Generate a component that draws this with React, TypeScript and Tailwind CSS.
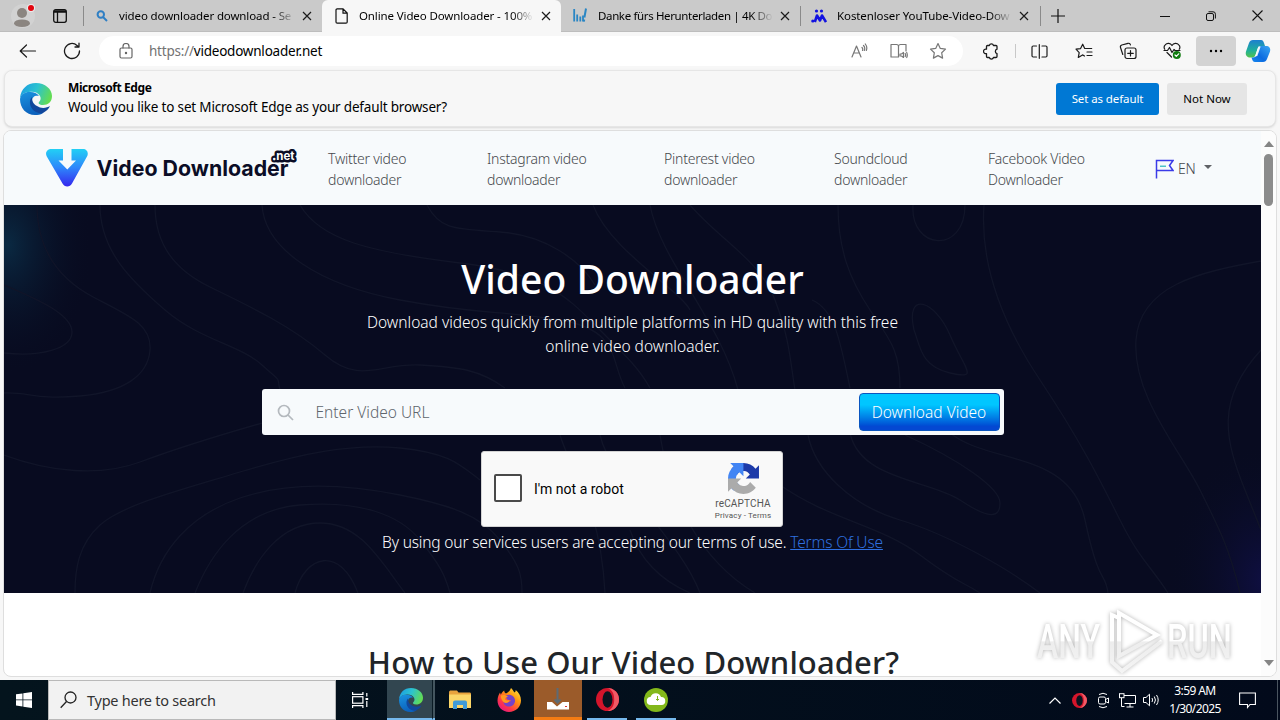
import { ReactNode } from 'react';

const Close = ({ className = '' }: { className?: string }) => (
    <svg width="10" height="10" viewBox="0 0 10 10" className={className} fill="none" stroke="#1b1b1b" strokeWidth="1.2">
        <path d="M1 1l8 8M9 1l-8 8" />
    </svg>
);

const EdgeLogo = ({ size, id }: { size: number; id: string }) => (
    <svg width={size} height={size} viewBox="0 0 32 32">
        <defs>
            <linearGradient id={id + 'a'} x1="0" y1="0.2" x2="1" y2="0.5">
                <stop offset="0" stopColor="#1b9de2" />
                <stop offset="0.5" stopColor="#2cc3cf" />
                <stop offset="1" stopColor="#63dc52" />
            </linearGradient>
            <linearGradient id={id + 'b'} x1="0" y1="0" x2="0.3" y2="1">
                <stop offset="0" stopColor="#1a94e0" />
                <stop offset="1" stopColor="#0c62bd" />
            </linearGradient>
        </defs>
        <path d="M0 15C1 6 7 0 16 0c9 0 16 6 16 13 0 6-4 9-9 9-4 0-5-2-4-3 2-2 2-4 1-6-2-4-7-5-11-4-4 0-7 2-9 6z" fill={`url(#${id}a)`} />
        <path d="M0 16c1-5 5-7 9-7 4-.5 8 1 10 4-4-1-7 1-7 5 0 6 6 10 11 12-3 2-5 2-8 2C6 32 0 25 0 16z" fill={`url(#${id}b)`} />
        <path d="M12 14c-4 4-2 12 4 15 3 1 5 2 7 1 3-2 6-4 7-7-3 2-9 3-13 0-4-2-5-5-5-9z" fill="#11479c" />
    </svg>
);

const Opera = ({ size }: { size: number }) => (
    <svg width={size} height={size} viewBox="0 0 24 24">
        <circle cx="12" cy="12" r="12" fill="#d4152b" />
        <path d="M12 0a12 12 0 0 1 0 24c5-2 7-6 7-12S17 2 12 0z" fill="#f05a66" />
        <ellipse cx="12" cy="12" rx="5.2" ry="8.6" fill="#0a1420" />
    </svg>
);

type TabProps = { icon: ReactNode; title: string; active?: boolean; divider?: boolean; text: string };

const Tab = ({ icon, title, active, divider, text }: TabProps) => (
    <div className={`relative flex h-8 w-[239px] shrink-0 items-center ${active ? 'rounded-t-md bg-[#f7f7f7]' : ''}`}>
        {divider && <div className="absolute left-0 top-[6px] h-5 w-px bg-[#8a8a8a]" />}
        <div className="ml-[11px] flex w-4 justify-center">{icon}</div>
        <div className={`ml-[9px] w-[176px] overflow-hidden whitespace-nowrap text-[11.5px] text-black [mask-image:linear-gradient(to_right,black_154px,transparent_176px)] ${text}`}>{title}</div>
        <Close className="ml-[7px]" />
    </div>
);

const TabBar = () => (
    <div className="flex h-8 shrink-0 items-center border-b border-[#bdbdbd] bg-[#cacaca]">
        <div className="relative ml-[11px] flex h-6 w-6 items-center justify-center">
            <svg width="24" height="24" viewBox="0 0 24 24">
                <circle cx="12" cy="12" r="12" fill="#d2d2d2" />
                <circle cx="11" cy="9" r="5" fill="#8b8580" />
                <ellipse cx="11" cy="19.2" rx="8" ry="3.8" fill="#8b8580" />
                <circle cx="20" cy="4" r="4" fill="#ececec" />
                <circle cx="20" cy="4" r="3" fill="#e2060f" />
            </svg>
        </div>
        <svg className="ml-[18px] mr-[16px]" width="14" height="14" viewBox="0 0 14 14" fill="none" stroke="#111" strokeWidth="1.3">
            <rect x=".7" y=".7" width="12.6" height="12.6" rx="2" />
            <path d="M.7 3h12.6M1 2h12M4.5 3v10" />
        </svg>
        <Tab
            divider
            text="tracking-[-0.12px]"
            title="video downloader download - Se"
            icon={
                <svg width="12" height="12" viewBox="0 0 12 12" fill="none" stroke="#2f7fc4" strokeWidth="2">
                    <circle cx="4.8" cy="4.5" r="3.2" />
                    <path d="M7 7l4 4" />
                </svg>
            }
        />
        <Tab
            active
            text="tracking-[-0.12px] pl-px"
            title="Online Video Downloader - 100%"
            icon={
                <svg width="13" height="16" viewBox="0 0 13 16" fill="none" stroke="#111" strokeWidth="1.2">
                    <path d="M1 2a1.2 1.2 0 0 1 1.2-1.2H8l4.2 4.3V14a1.2 1.2 0 0 1-1.2 1.2H2.200A1.200 1.200 0 0 1 1 14zM8 1v4.200h4.200" />
                </svg>
            }
        />
        <Tab
            text="tracking-[-0.36px] pl-px"
            title="Danke fürs Herunterladen | 4K Do"
            icon={
                <svg width="14" height="15" viewBox="0 0 14 15" stroke="#2a86c4" strokeWidth="1.8" fill="none">
                    <path d="M1.200 1v12.500M4.200 6.500v7M7.300 8.500v5M10 7.500v6" />
                    <path d="M13 .5l-1.600 9M11.200 11.500l-.3 2" strokeWidth="2" />
                </svg>
            }
        />
        <Tab
            divider
            text="tracking-[-0.1px] pl-px"
            title="Kostenloser YouTube-Video-Dow"
            icon={
                <svg width="16" height="14" viewBox="0 0 16 14" fill="#1212e0">
                    <circle cx="5.500" cy="2" r="1.600" />
                    <circle cx="10.500" cy="2" r="1.600" />
                    <circle cx="1.800" cy="12" r="1.600" />
                    <path d="M3.800 13L6 6.500l3 5 2-5L15 13" stroke="#1212e0" strokeWidth="2.600" fill="none" strokeLinejoin="round" />
                </svg>
            }
        />
        <div className="ml-px h-5 w-px bg-[#8a8a8a]" />
        <svg className="ml-[10px]" width="14" height="14" viewBox="0 0 14 14" stroke="#111" strokeWidth="1.200">
            <path d="M7 0v14M0 7h14" />
        </svg>
        <div className="ml-auto flex items-center pr-[17px]">
            <svg width="10" height="10" viewBox="0 0 10 10" stroke="#111"><path d="M0 5.500h10" /></svg>
            <svg className="ml-9" width="10" height="10" viewBox="0 0 10 10" fill="none" stroke="#111">
                <rect x=".5" y="2.500" width="7" height="7" rx="1.500" />
                <path d="M2.500.8h4.500a2.300 2.300 0 0 1 2.400 2.400v4.300" />
            </svg>
            <svg className="ml-9" width="11" height="11" viewBox="0 0 11 11" stroke="#111" strokeWidth="1.100"><path d="M.5.5l10 10M10.500.5l-10 10" /></svg>
        </div>
    </div>
);

const Slot = ({ children, className = 'w-11' }: { children: ReactNode; className?: string }) => (
    <div className={`flex h-[30px] shrink-0 items-center justify-center ${className}`}>{children}</div>
);

const line = { fill: 'none', stroke: '#1b1b1b', strokeWidth: 1.2, strokeLinecap: 'round', strokeLinejoin: 'round' } as const;
const starPath = 'M9 1.500l2.300 4.900 5.200.7-3.800 3.700.9 5.300L9 13.600l-4.600 2.500.9-5.300L1.500 7.100l5.200-.7z';

const Toolbar = () => (
    <div className="flex h-[38px] shrink-0 items-center pl-[6px]">
        <Slot>
            <svg width="18" height="14" viewBox="0 0 18 14" {...line}><path d="M16.500 7H1.200M7.500 1L1.200 7l6.300 6" /></svg>
        </Slot>
        <Slot>
            <svg width="18" height="18" viewBox="0 0 18 18" {...line} strokeWidth="1.300"><path d="M16.500 9A7.500 7.500 0 1 1 14 3.400l1.800 1.600M16 1.200V5h-4" /></svg>
        </Slot>
        <div className="ml-[5px] flex h-[30px] w-[864px] items-center rounded-full bg-white">
            <svg className="ml-[20px]" width="14" height="16" viewBox="0 0 14 16" {...line} stroke="#666">
                <rect x="1" y="5" width="12" height="10" rx="1.500" />
                <path d="M4 5V3.500a3 3 0 0 1 6 0V5" />
                <circle cx="7" cy="10" r=".6" fill="#666" />
            </svg>
            <div className="ml-[16px] text-[13.5px] tracking-[-0.22px] text-black"><span className="text-[#737373]">https://</span>videodownloader.net</div>
            <div className="ml-auto flex items-center pr-[6px]">
                <Slot className="w-10">
                    <svg width="17" height="16" viewBox="0 0 17 16" {...line} stroke="#777">
                        <path d="M1 14L5.500 3 10 14M2.600 10h5.800M11 4.500q1.200 1.200.5 3M12.500 2.500q2 2 .8 5M14.300 1q2.400 3 1 6.500" />
                    </svg>
                </Slot>
                <Slot className="w-10">
                    <svg width="18" height="16" viewBox="0 0 18 16" {...line} stroke="#777">
                        <path d="M8.500 14H1V1.500h5.500a2 2 0 0 1 2 2V14M8.500 3.500a2 2 0 0 1 2-2H16V8" />
                        <path d="M10 11h1.500l2-1.500v5L11.500 13H10zM15.200 10.500q.8 1.500 0 3M16.700 9.500q1.200 2.500 0 5" />
                    </svg>
                </Slot>
                <Slot className="w-[38px]">
                    <svg width="18" height="18" viewBox="0 0 18 18" {...line} stroke="#777"><path d={starPath} /></svg>
                </Slot>
            </div>
        </div>
        <Slot className="ml-[6px] w-11">
            <svg width="17" height="17" viewBox="0 0 17 17" {...line} strokeWidth="1.300">
                <path d="M4.500 2.500h1.800a2.200 2.200 0 0 1 4.200 0H13a1 1 0 0 1 1 1V6.200a2.300 2.300 0 0 0 0 4.400v2.900a1 1 0 0 1-1 1h-2.500a2.200 2.200 0 0 1-4.200 0H4.500a1 1 0 0 1-1-1v-2.900a2.300 2.300 0 1 1 0-4.400V3.500a1 1 0 0 1 1-1z" />
            </svg>
        </Slot>
        <div className="ml-[2px] h-[14px] w-px bg-[#c8c8c8]" />
        <Slot className="ml-[1px] w-11">
            <svg width="17" height="15" viewBox="0 0 17 15" {...line}><path d="M5.500 13H2.200A1.200 1.200 0 0 1 1 11.800V3.200A1.200 1.200 0 0 1 2.200 2h3.300M11 2h3.800A1.200 1.200 0 0 1 16 3.200v8.600a1.200 1.200 0 0 1-1.200 1.200H11M8.300.7v13.600" /></svg>
        </Slot>
        <Slot className="ml-px w-11">
            <svg width="18" height="17" viewBox="0 0 18 17" {...line}><path d="M9.500 13l-2-1.100-4.200 2.500.9-4.800L1 6.200l4.600-.6L7.700 1.200l2 4.300h7M12 9h5M12 12.500h5" /></svg>
        </Slot>
        <Slot>
            <svg width="18" height="18" viewBox="0 0 18 18" {...line}>
                <rect x="6" y="6" width="11" height="10.500" rx="2" />
                <path d="M11.500 8.500v5.500M8.700 11.300h5.600M3.800 12.500L1.500 5.500A2 2 0 0 1 2.800 3L9 1.300a2 2 0 0 1 2.400 1.500" />
            </svg>
        </Slot>
        <Slot>
            <svg width="19" height="18" viewBox="0 0 19 18" {...line}>
                <path d="M9 3.500C7.500 1 4 .8 2.200 2.800 1 4 1 6 1.800 7.300M9 3.500C10.500 1 14 .8 15.800 2.800 17 4 17 6 16.200 7.300M4 10.500l4.500 4.500M1 8.500h3.500l2-3 2.500 5 2-3 1 1H17" />
                <circle cx="13.800" cy="13" r="4" fill="#107c10" stroke="none" />
                <path d="M12 13l1.300 1.300 2.400-2.500" stroke="#fff" />
            </svg>
        </Slot>
        <Slot className="ml-[2px] w-10 rounded bg-[#d3d3d3]">
            <svg width="14" height="4" viewBox="0 0 14 4"><circle cx="2" cy="2" r="1.200" /><circle cx="7" cy="2" r="1.200" /><circle cx="12" cy="2" r="1.200" /></svg>
        </Slot>
        <Slot className="w-11">
            <svg width="26" height="24" viewBox="0 0 26 24">
                <defs>
                    <linearGradient id="cpa" x1="0" y1="0" x2="0" y2="1"><stop offset="0" stopColor="#1d7fd0" /><stop offset=".6" stopColor="#1fb09a" /><stop offset="1" stopColor="#54c34c" /></linearGradient>
                    <linearGradient id="cpb" x1="1" y1="0" x2="0" y2="1"><stop offset="0" stopColor="#3aa7f3" /><stop offset=".6" stopColor="#0c6be0" /><stop offset="1" stopColor="#1688f0" /></linearGradient>
                </defs>
                <path d="M8 1h8c2 0 2.500 1.500 3 3l1 3h-4c-2 0-3 1-3.600 3L10.500 16c-.6 1.600-1.500 2.500-3 2.500H5c-3 0-5-2.500-4-6L4 4c.7-2 2-3 4-3z" fill="url(#cpa)" />
                <path d="M18 23h-8c-2 0-2.500-1.500-3-3l-.5-1.500h1.500c2 0 3-1 3.600-3L13.500 9.500C14.100 7.900 15 7 16.500 7H21c3 0 5 2 4 5.500L22 20c-.7 2-2 3-4 3z" fill="url(#cpb)" />
                <path d="M13.500 7.500L10 17.500l2.300-.5L15.500 8z" fill="#fff" opacity=".9" />
            </svg>
        </Slot>
    </div>
);

const DefaultBrowserBar = () => (
    <div className="mx-1 flex h-[57px] shrink-0 items-center rounded-lg border border-[#e6e6e6] bg-[#f7f7f7] pl-[15px] pr-7 shadow-sm">
        <EdgeLogo size={32} id="bar" />
        <div className="ml-4 pb-px text-black">
            <div className="text-[12px] font-bold leading-[18px] tracking-[-0.42px]">Microsoft Edge</div>
            <div className="text-[13.5px] leading-5 tracking-[-0.18px]">Would you like to set Microsoft Edge as your default browser?</div>
        </div>
        <button className="ml-auto h-8 w-[103px] rounded-[3px] bg-[#0078d4] text-[11.5px] tracking-[-0.1px] text-white">Set as default</button>
        <button className="ml-2 h-8 w-20 rounded-[3px] bg-[#e5e5e5] text-[11.5px] text-black">Not Now</button>
    </div>
);

const navLinks = [
    { label: ['Twitter video', 'downloader'], width: 'w-[159px]' },
    { label: ['Instagram video', 'downloader'], width: 'w-[177px]' },
    { label: ['Pinterest video', 'downloader'], width: 'w-[170px]' },
    { label: ['Soundcloud', 'downloader'], width: 'w-[154px]' },
    { label: ['Facebook Video', 'Downloader'], width: 'w-[167px]' },
];

const SiteHeader = () => (
    <div className="flex h-[74px] shrink-0 items-center bg-[#f7fafc] pl-[42px]">
        <svg width="251" height="42" viewBox="0 0 251 42" className="shrink-0">
            <defs>
                <linearGradient id="vlogo" x1="0" y1="0" x2="0" y2="1">
                    <stop offset="0" stopColor="#22d0f5" />
                    <stop offset="0.5" stopColor="#2e86fb" />
                    <stop offset="1" stopColor="#3526ee" />
                </linearGradient>
            </defs>
            <path d="M5 2h32c4 0 6 4 4 7.500L26 36.500c-2 4-7.500 4-9.500 0L.8 9.500C-1.200 6 1 2 5 2z" fill="url(#vlogo)" />
            <path d="M17 0h8.500v13.500H30l-8.700 9-8.800-9H17z" fill="#f7fafc" />
            <text x="50.500" y="29" textLength="192" lengthAdjust="spacingAndGlyphs" className="fill-[#0b0d26] font-['Inter'] text-[22px] font-bold">Video Downloader</text>
            <text x="226.500" y="12.500" textLength="22" lengthAdjust="spacingAndGlyphs" className="fill-white stroke-[#0b0d26] stroke-[5px] font-['Inter'] text-[12px] font-bold [paint-order:stroke] [stroke-linejoin:round]">.net</text>
        </svg>
        <div className="ml-[31px] flex pt-px text-[14px] font-light leading-[21px] tracking-[-0.24px] text-[#45484c]">
            {navLinks.map((link) => (
                <div key={link.label[0]} className={link.width}>
                    <div>{link.label[0]}</div>
                    <div>{link.label[1]}</div>
                </div>
            ))}
        </div>
        <svg className="mt-px" width="19" height="20" viewBox="0 0 19 20" fill="none" stroke="#3b3be8" strokeWidth="1.500">
            <path d="M1.500 19.500V1.500H18l-3.500 5 3.500 5H1.500" />
            <path d="M5 7.200h6" stroke="#4cc3c9" />
        </svg>
        <div className="ml-1 text-[14px] font-light tracking-[-0.2px] text-[#45484c]">EN</div>
        <div className="mb-[2px] ml-2 border-x-4 border-t-4 border-x-transparent border-t-[#606266]" />
    </div>
);

const contours = [
    'M37 205C37 250 60 280 95 298S152 325 150 350 125 392 80 396 30 392 4 393',
    'M4 285C40 300 72 315 72 332S40 357 4 353',
    'M100 205C100 250 130 280 165 310S240 345 262 365 276 375 280 390',
    'M155 205C155 245 175 270 210 287S290 325 325 355 380 363 420 365 480 370 505 388',
    'M262 205C265 250 320 285 400 300S500 310 560 320 610 360 625 388',
    'M300 205C320 240 370 252 460 263S570 300 600 330 640 370 650 388',
    'M427 205C440 230 455 229 500 232S580 260 595 285',
    'M4 455C50 472 100 477 140 462S220 435 262 423',
    'M75 593C75 570 78 545 100 525S180 490 240 472 350 443 400 448 460 465 480 480',
    'M150 593C160 550 190 515 240 498S350 485 400 495 480 515 500 540 522 575 522 593',
    'M195 593C210 555 240 510 300 505S400 515 420 540 445 575 450 593',
    'M243 593C255 560 280 523 320 523S380 560 405 593',
    'M295 593C305 555 340 545 358 593',
    'M593 205C610 250 680 290 690 310',
    'M650 205C660 260 720 320 738 390',
    'M690 205C720 240 760 260 775 300S790 360 795 390',
    'M838 205C838 250 850 280 870 310S900 350 900 388',
    'M913 205C910 250 965 255 965 205',
    'M984 205C980 260 1000 320 1040 380S1100 480 1120 520 1150 565 1168 593',
    'M1261 261C1200 272 1140 285 1136 340S1180 450 1200 490 1230 550 1240 593',
    'M1261 350C1215 400 1225 440 1245 490L1261 530',
    'M914 330C905 290 935 300 950 335S980 380 950 373 920 345 914 330z',
    'M808 435C815 470 850 505 900 520S1010 570 1040 593',
    'M850 433C860 480 930 480 960 500S1000 518 1000 503 960 460 905 435',
    'M950 433C990 465 1070 450 1085 520S1105 570 1108 593',
    'M780 485C830 520 880 525 920 555S960 580 980 593',
    'M660 435C670 500 700 560 755 593M630 530C640 560 660 580 690 593',
    'M560 435C570 470 600 500 605 593M600 435C610 480 680 540 700 593',
    'M812 300C835 310 840 340 850 388',
];

const RecaptchaLogo = () => (
    <svg width="31" height="31" viewBox="0 0 64 64">
        <path fill="#1c3aa9" d="M64 31.955l-.033-1.370V4.687l-7.160 7.160C50.948 4.674 42.033.093 32.050.093c-10.400 0-19.622 4.960-25.458 12.640l11.736 11.860a15.550 15.550 0 0 1 4.754-5.334c2.050-1.600 4.952-2.906 8.968-2.906.485 0 .860.057 1.135.163 4.976.393 9.288 3.140 11.828 7.124l-8.307 8.307L64 31.953" />
        <path fill="#4285f4" d="M31.862.094l-1.370.033H4.594l7.160 7.160C4.580 13.147 0 22.060 0 32.046c0 10.400 4.960 19.622 12.640 25.458L24.500 45.768a15.550 15.550 0 0 1-5.334-4.754c-1.600-2.050-2.906-4.952-2.906-8.968 0-.485.057-.860.163-1.135.393-4.976 3.140-9.288 7.124-11.828l8.307 8.307L31.860.095" />
        <path fill="#ababab" d="M0 32.045l.033 1.370v25.898l7.160-7.160c5.860 7.173 14.774 11.754 24.760 11.754 10.400 0 19.622-4.960 25.458-12.640l-11.736-11.860a15.550 15.550 0 0 1-4.754 5.334c-2.050 1.600-4.952 2.906-8.968 2.906-.485 0-.860-.057-1.135-.163-4.976-.393-9.288-3.140-11.828-7.124l8.307-8.307L0 32.050" />
    </svg>
);

const Hero = () => (
    <div className="relative h-[388px] shrink-0 overflow-hidden bg-[#080b20]">
        <svg className="absolute inset-0" width="1257" height="388" viewBox="4 205 1257 388">
            <defs>
                <radialGradient id="glowLeft"><stop offset="0" stopColor="#0a2942" /><stop offset="1" stopColor="#080b20" stopOpacity="0" /></radialGradient>
                <radialGradient id="glowRight"><stop offset="0" stopColor="#0f0f42" /><stop offset="1" stopColor="#080b20" stopOpacity="0" /></radialGradient>
            </defs>
            <ellipse cx="8" cy="245" rx="85" ry="130" fill="url(#glowLeft)" />
            <ellipse cx="1265" cy="580" rx="100" ry="140" fill="url(#glowRight)" />
            <g fill="none" stroke="#111529" strokeWidth="1.300">
                {contours.map((d) => <path key={d} d={d} />)}
            </g>
        </svg>
        <div className="relative flex flex-col items-center pt-[50px] text-white">
            <h1 className="text-[39px] font-medium leading-[48px]">Video Downloader</h1>
            <p className="mt-[7px] text-center text-[15.5px] font-light leading-6">
                Download videos quickly from multiple platforms in HD quality with this free<br />online video downloader.
            </p>
            <div className="mt-[31px] flex h-[46px] w-[742px] items-center rounded-[3px] bg-[#f7fafc] pr-1">
                <svg className="ml-[15px]" width="17" height="17" viewBox="0 0 17 17" fill="none" stroke="#b4b9be" strokeWidth="1.700">
                    <circle cx="7" cy="7" r="5.500" />
                    <path d="M11 11l5 5" />
                </svg>
                <div className="ml-[22px] pt-[2px] text-[15.5px] font-light text-[#5f666d]">Enter Video URL</div>
                <button className="ml-auto h-[38px] w-[141px] rounded border border-[#0a55c0] bg-linear-to-b from-[#00c6ff] from-30% to-[#0448d2] to-90% pt-[2px] text-[15.5px] font-light text-white">Download Video</button>
            </div>
            <div className="mr-px mt-4 flex h-[76px] w-[302px] items-center rounded-[3px] border border-[#d3d3d3] bg-[#f9f9f9] pl-3">
                <div className="mb-[2px] h-7 w-7 rounded-[2px] border-2 border-[#4a4a4a] bg-white" />
                <div className="ml-3 font-['Roboto'] text-[14px] text-black">I'm not a robot</div>
                <div className="ml-auto mr-[10px] flex w-[58px] flex-col items-center pt-[6px] font-['Roboto'] text-[#555]">
                    <RecaptchaLogo />
                    <div className="mt-[3px] text-[10px] leading-[13px] tracking-[0.15px]">reCAPTCHA</div>
                    <div className="whitespace-nowrap text-[8px] leading-[12px] tracking-[0.15px]">Privacy - Terms</div>
                </div>
            </div>
            <p className="mt-[3px] text-[15.5px] font-light leading-6 tracking-[-0.17px]">
                By using our services users are accepting our terms of use. <a className="text-[#2f6fdf] underline">Terms Of Use</a>
            </p>
        </div>
    </div>
);

const Watermark = () => (
    <svg className="absolute bottom-0 left-[1028px] drop-shadow-[0_0_2px_rgba(0,0,0,0.3)]" width="210" height="68" viewBox="0 0 210 68">
        <defs>
            <linearGradient id="wm" gradientUnits="userSpaceOnUse" x1="0" y1="0" x2="0" y2="68">
                <stop offset=".48" stopColor="#fff" />
                <stop offset=".5" stopColor="#ededed" />
                <stop offset="1" stopColor="#f5f5f5" />
            </linearGradient>
        </defs>
        <g fill="url(#wm)" className="font-['Roboto'] text-[49px] font-medium">
            <text x="5" y="50" textLength="63" lengthAdjust="spacingAndGlyphs">ANY</text>
            <text x="135" y="50" textLength="65" lengthAdjust="spacingAndGlyphs">RUN</text>
        </g>
        <g fill="none" stroke="url(#wm)" strokeWidth="4">
            <path d="M87 5v43l38-21z" />
            <path d="M87 10l-7-3v47l10 9 40-30" />
        </g>
    </svg>
);

const Scrollbar = () => (
    <div className="flex w-[15px] shrink-0 flex-col items-center bg-[#fcfcfc] py-[10px]">
        <div className="border-x-[5px] border-b-[6px] border-x-transparent border-b-[#858585]" />
        <div className="mt-[7px] h-[52px] w-[9px] rounded-full bg-[#8b8b8b]" />
        <div className="mt-auto border-x-[5px] border-t-[6px] border-x-transparent border-t-[#858585]" />
    </div>
);

const WebPage = () => (
    <div className="mx-[3px] mt-[3px] flex h-[547px] shrink-0 overflow-hidden rounded-lg border border-[#dedede] bg-white">
        <div className="relative flex w-[1257px] shrink-0 flex-col overflow-hidden">
            <SiteHeader />
            <Hero />
            <h2 className="mt-[48px] pl-[2px] text-center text-[31px] font-medium leading-[42px] tracking-[0.1px] text-[#212529]">How to Use Our Video Downloader?</h2>
            <Watermark />
        </div>
        <Scrollbar />
    </div>
);

const Taskbar = () => (
    <div className="mt-auto flex h-10 shrink-0 items-center bg-linear-to-r from-[#04141d] to-[#020a1b] text-white">
        <Slot className="w-12">
            <svg width="16" height="16" viewBox="0 0 16 16" fill="#fff"><path d="M0 2.300l6.500-.9v6.100H0zM7.300 1.200L16 0v7.500H7.300zM0 8.300h6.500v6.200L0 13.600zM7.300 8.300H16V16l-8.700-1.200z" /></svg>
        </Slot>
        <div className="flex h-10 w-72 items-center border border-[#b9b9b9] bg-[#f2f2f2]">
            <svg className="ml-[11px]" width="17" height="18" viewBox="0 0 17 18" fill="none" stroke="#222" strokeWidth="1.300">
                <circle cx="10.500" cy="6.500" r="5.500" />
                <path d="M6.500 10.500L.7 16.700" />
            </svg>
            <div className="ml-[10px] pt-[2px] text-[14.500px] tracking-[-0.25px] text-[#333]">Type here to search</div>
        </div>
        <Slot className="w-12">
            <svg width="17" height="16" viewBox="0 0 17 16" fill="none" stroke="#fff" strokeWidth="1.200">
                <path d="M.6 0v2.400h10.300V0M.6 16v-2.400h10.300V16" />
                <rect x=".6" y="4.700" width="10.300" height="6.500" />
                <path d="M14.800 1v3.500M14.800 9v6" />
                <path d="M13.500 6h2.700v2h-2.700z" fill="#fff" stroke="none" />
            </svg>
        </Slot>
        <div className="ml-[3px] flex h-10 w-[45px] items-center justify-center border-b-2 border-[#76b9ed] bg-[#324650] pl-[2px] pt-[2px]"><EdgeLogo size={24} id="task" /></div>
        <div className="h-10 w-[3px] border-b-2 border-l border-b-[#76b9ed] border-l-[#0a1b24] bg-[#44565f]" />
        <Slot className="w-[49px]">
            <svg width="22" height="20" viewBox="0 0 22 20">
                <path d="M0 2.500C0 1 .8.5 2 .5h6l1.500 2H20.500c1 0 1.500.5 1.500 1.500V17H0z" fill="#e8a33d" />
                <path d="M0 4.500h22V18H0z" fill="#fbd668" />
                <path d="M4 19v-6.500a2 2 0 0 1 2-2h10a2 2 0 0 1 2 2V19h-4v-4H8v4z" fill="#3f9bd8" />
            </svg>
        </Slot>
        <Slot className="w-[50px]">
            <svg width="24" height="24" viewBox="0 0 24 24">
                <defs>
                    <linearGradient id="fox" x1="1" y1="0" x2=".2" y2="1"><stop offset="0" stopColor="#fff14d" /><stop offset=".4" stopColor="#ff980e" /><stop offset=".75" stopColor="#ff3647" /><stop offset="1" stopColor="#e31587" /></linearGradient>
                </defs>
                <path d="M14 0c1.500 1 2 3 3.500 4.500 1-.5 1.200-1.500 1.200-2.500 3 2.500 5.300 6 5.300 10.500C24 19 18.500 24 12 24S.5 19 .5 12.500C.5 9 2 6 3 4.500l.8 2.300C4.500 5 6 3 7.200 2.500 7.200 4 8 5 9 5.500c2.500-1 4-3 5-5.500z" fill="url(#fox)" />
                <path d="M7 9.500c1-2 4-3 6.500-2.500 3 .5 5 3.500 4.500 6.500s-3 5-6 5-5.500-2-5.700-5c1.500 1.500 4 1.700 5.500.5 1-.8 2-.6 2.200-1.500-1.500-.6-4 0-4.500-2.200z" fill="#7542c8" />
                <path d="M4 7.500c2-1 5-.5 7 1-1 .7-2.500 1-3 2.500 1 2 3 1.500 4.500 1.500-1 2.500-4.500 3.500-6.500 1-1.500-2-2.500-4-2-6z" fill="#ff9a1f" />
            </svg>
        </Slot>
        <div className="flex h-10 w-12 items-center justify-center border-b-[3px] border-[#f57c13] bg-[#9b5b2a]">
            <svg width="22" height="24" viewBox="0 0 22 24">
                <path d="M0 15h5l5 4.500L15.500 15H22v7.500H0z" fill="#fff" />
                <path d="M10.500 1v14M7.500 12.500l3 3 3-3" stroke="#5d6b74" strokeWidth="2" fill="none" />
                <path d="M18 19.500h2" stroke="#d33" />
            </svg>
        </div>
        <div className="ml-[5px] flex h-10 w-10 items-center justify-center border-b-2 border-[#76b9ed]"><Opera size={23} /></div>
        <div className="ml-[9px] flex h-10 w-10 items-center justify-center border-b-2 border-[#76b9ed] pt-px">
            <svg width="24" height="24" viewBox="0 0 24 24">
                <circle cx="12" cy="12" r="12" fill="#83b81a" />
                <path d="M7 17a4 4 0 0 1-.5-8A5.500 5.500 0 0 1 17 9a4 4 0 0 1 .5 8z" fill="#fff" />
                <path d="M13.500 8v4.500M12 11l1.500 1.500L15 11" stroke="#83b81a" fill="none" />
            </svg>
        </div>
        <div className="ml-auto flex items-center">
            <Slot className="w-6"><svg width="12" height="7" viewBox="0 0 12 7" fill="none" stroke="#fff" strokeWidth="1.200"><path d="M.5 6.500L6 1l5.500 5.500" /></svg></Slot>
            <Slot className="w-6"><Opera size={15} /></Slot>
            <Slot className="w-6">
                <svg width="13" height="17" viewBox="0 0 13 17" fill="none" stroke="#fff">
                    <rect x="1.500" y="5" width="7" height="7" rx="1.500" />
                    <path d="M8.500 7.500l3-1.500v5l-3-1.500M2 2.500q4-2.500 8 0M2 14.500q4 2.500 8 0" />
                </svg>
            </Slot>
            <Slot className="w-6">
                <svg width="17" height="15" viewBox="0 0 17 15" fill="none" stroke="#fff">
                    <path d="M5 2.500h11.500v8H5.500M11 10.500V14M7.500 14h7M2.500 5v8.500h3" />
                    <rect x=".5" y=".7" width="4.500" height="4" />
                </svg>
            </Slot>
            <Slot className="w-6">
                <svg width="17" height="14" viewBox="0 0 17 14" fill="none" stroke="#fff">
                    <path d="M.5 4.500H3L6.500 1.200v11.600L3 9.500H.5zM9 5q1.200 2 0 4M11.300 3.500q2.300 3.500 0 7M13.500 2q3.400 5 0 10" />
                </svg>
            </Slot>
            <div className="ml-[3px] w-[58px] whitespace-nowrap text-center text-[12px] leading-[18px] tracking-[-0.6px]">
                <div>3:59 AM</div>
                <div>1/30/2025</div>
            </div>
            <Slot className="ml-[12px] w-[22px]">
                <svg width="17" height="17" viewBox="0 0 17 17" fill="none" stroke="#fff" strokeWidth="1.100"><path d="M.6 1h15.800v11.500H11l-2.500 3v-3H.6z" /></svg>
            </Slot>
            <div className="ml-[19px] mr-[2px] h-10 w-px bg-[#4a5560]" />
        </div>
    </div>
);

export default function App() {
    return (
        <div className="flex h-[720px] w-[1280px] flex-col overflow-hidden bg-[#f7f7f7] font-['Noto_Sans','Open_Sans',sans-serif]">
            <TabBar />
            <Toolbar />
            <DefaultBrowserBar />
            <WebPage />
            <Taskbar />
        </div>
    );
}
